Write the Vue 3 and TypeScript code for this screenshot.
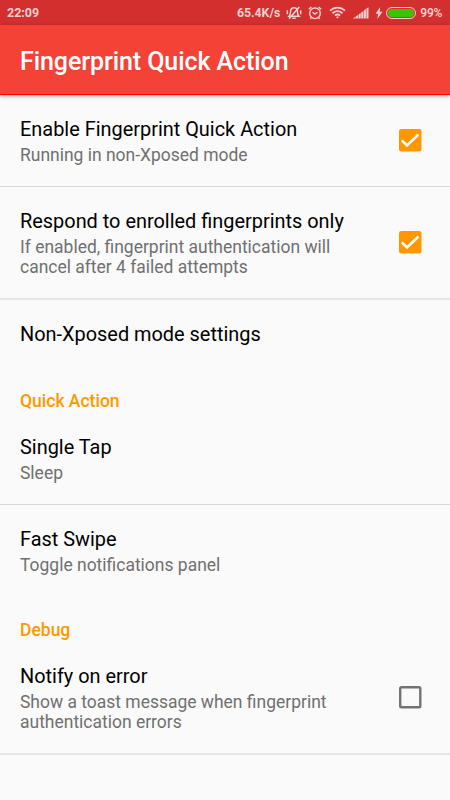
<script setup lang="ts">
interface Pref {
  kind: 'item' | 'category'
  title: string
  summary?: string[]
  checked?: boolean
  divider?: boolean
}

const prefs: Pref[] = [
  { kind: 'item', title: 'Enable Fingerprint Quick Action', summary: ['Running in non-Xposed mode'], checked: true, divider: true },
  { kind: 'item', title: 'Respond to enrolled fingerprints only', summary: ['If enabled, fingerprint authentication will', 'cancel after 4 failed attempts'], checked: true, divider: true },
  { kind: 'item', title: 'Non-Xposed mode settings' },
  { kind: 'category', title: 'Quick Action' },
  { kind: 'item', title: 'Single Tap', summary: ['Sleep'], divider: true },
  { kind: 'item', title: 'Fast Swipe', summary: ['Toggle notifications panel'] },
  { kind: 'category', title: 'Debug' },
  { kind: 'item', title: 'Notify on error', summary: ['Show a toast message when fingerprint', 'authentication errors'], checked: false, divider: true },
]
</script>

<template>
  <div class="screen">
    <header class="status">
      <span class="clock">22:09</span>
      <span class="speed">65.4K/s</span>
      <svg class="mute" width="16" height="14" viewBox="0 0 16 14" fill="none" stroke="currentColor" stroke-width="1.5">
        <path d="M3 10.300c1.300-1.300 1.500-2.500 1.500-4.300C4.500 3.500 6 1.700 8 1.700s3.500 1.800 3.500 4.300c0 1.800.2 3 1.500 4.300z" />
        <path d="M6.300 12.200h3.400M1.300 4.300v4M14.700 4.300v4M3 12.800L13.300 1" />
      </svg>
      <svg class="alarm" width="14" height="14" viewBox="0 0 14 14" fill="none" stroke="currentColor" stroke-width="1.400">
        <circle cx="7" cy="7.300" r="5.300" />
        <path d="M4.500 6.300L7 8.100l2.500-1.800M.8 3.300L3.400 1M13.200 3.300L10.600 1M3.300 11.600l-1 1.200M10.700 11.600l1 1.200" />
      </svg>
      <svg class="wifi" width="17" height="13" viewBox="0 0 17 13" fill="none" stroke="currentColor" stroke-width="1.800">
        <path d="M1 4.600c4.300-3.900 10.700-3.900 15 0M3.500 7.200c3-2.600 7-2.600 10 0M5.900 9.600c1.600-1.300 3.600-1.300 5.200 0" />
        <path d="M7 10.900c.9-.7 2.100-.7 3 0L8.500 12.500z" fill="currentColor" stroke="none" />
      </svg>
      <svg class="signal" width="16" height="12" viewBox="0 0 16 12" fill="currentColor">
        <path d="M0 11.500l2.400-1.700v1.700zM2.800 9.400l2.200-1.500v3.600H2.800zM5.500 7.500l2.200-1.600v5.600H5.500zM8.200 5.500l2.200-1.600v7.600H8.200zM10.900 3.500l2-1.500v9.500h-2zM13.400 1.500l2.100-1.200v11.200h-2.100z" />
      </svg>
      <svg class="bolt" width="8" height="12" viewBox="0 0 8 12" fill="currentColor">
        <path d="M5.200 0L.6 6.800h2.600L2.300 12 7.600 4.800H4.700z" />
      </svg>
      <span class="battery"><span class="charge"></span></span>
      <span class="percent">99%</span>
    </header>

    <div class="toolbar"><h1>Fingerprint Quick Action</h1></div>

    <main>
      <template v-for="p in prefs" :key="p.title">
        <h2 v-if="p.kind === 'category'" class="category">{{ p.title }}</h2>
        <section v-else class="row" :class="{ divided: p.divider, single: !p.summary, double: p.summary?.length === 2 }">
          <div class="text">
            <div class="title">{{ p.title }}</div>
            <div v-if="p.summary" class="summary">
              <div v-for="line in p.summary" :key="line">{{ line }}</div>
            </div>
          </div>
          <svg v-if="p.checked !== undefined" class="check" width="24" height="24" viewBox="0 0 24 24">
            <template v-if="p.checked">
              <rect x="1" y="1" width="22.500" height="22.500" rx="2.300" fill="#ff9800" />
              <path d="M3.800 12.300l5.200 5.200L20.500 6.500" fill="none" stroke="#fff" stroke-width="2.500" />
            </template>
            <rect v-else x="2.200" y="2.200" width="20.100" height="20.100" rx="1.300" fill="none" stroke="#737373" stroke-width="2.400" />
          </svg>
        </section>
      </template>
    </main>
  </div>
</template>

<style>
body {
  margin: 0;
  background: #fafafa;
}
</style>

<style scoped>
.screen {
  width: 450px;
  height: 800px;
  overflow: hidden;
  background: #fafafa;
  font-family: Roboto, "Liberation Sans", sans-serif;
  color: #000;
}
.status {
  box-sizing: border-box;
  height: 25px;
  padding: 0 8px 0 7px;
  display: flex;
  align-items: center;
  background: #d32f2f;
  color: #f6d0d0;
  font-size: 12px;
  font-weight: 700;
  white-space: nowrap;
}
.clock {
  flex: 1;
  font-size: 12.500px;
}
.speed {
  margin-right: 6px;
  font-size: 12.300px;
}
.mute {
  margin-right: 6px;
}
.alarm {
  margin-right: 7px;
}
.wifi {
  margin-right: 7px;
}
.signal {
  margin-right: 6px;
}
.bolt {
  margin-right: 3px;
}
.battery {
  box-sizing: border-box;
  width: 30px;
  height: 12px;
  padding: 1px;
  border: 1px solid #f6d0d0;
  border-radius: 6px;
  margin-right: 4px;
}
.charge {
  display: block;
  height: 8px;
  border-radius: 4px;
  background: #42c003;
}
.percent {
  font-size: 12px;
  font-weight: 600;
  letter-spacing: -0.300px;
}
.toolbar {
  box-sizing: border-box;
  height: 70px;
  padding: 0 20px;
  display: flex;
  align-items: center;
  background: #f44336;
  border-bottom: 1px solid #fb0808;
  box-shadow: 0 1px 4px rgba(0, 0, 0, 0.35);
}
h1 {
  margin: 5px 0 0;
  color: #fff;
  font-size: 25px;
  line-height: 30px;
  font-weight: 500;
  letter-spacing: -0.080px;
  white-space: nowrap;
}
.row {
  box-sizing: border-box;
  height: 91px;
  padding: 23px 28px 0 20px;
  display: flex;
  justify-content: space-between;
}
.double {
  height: 112px;
}
.single {
  height: 68px;
  padding-top: 24px;
}
.row.divided {
  border-bottom: 1px solid #d8d8d8;
}
.row.divided.double {
  border-bottom: 2px solid #e6e6e6;
  height: 113px;
  margin-bottom: -1px;
}
.row.divided:not(.double) {
  height: 92px;
}
.text {
  white-space: nowrap;
}
.title {
  font-size: 19.920px;
  line-height: 24px;
}
.summary {
  margin-top: 3px;
  font-size: 17.480px;
  line-height: 20px;
  color: #707070;
}
.check {
  align-self: center;
  margin-top: -25px;
}
.category {
  box-sizing: border-box;
  height: 46px;
  margin: 0;
  padding: 24px 20px 0;
  color: #ff9800;
  font-size: 17.500px;
  line-height: 21px;
  font-weight: 500;
}
</style>
